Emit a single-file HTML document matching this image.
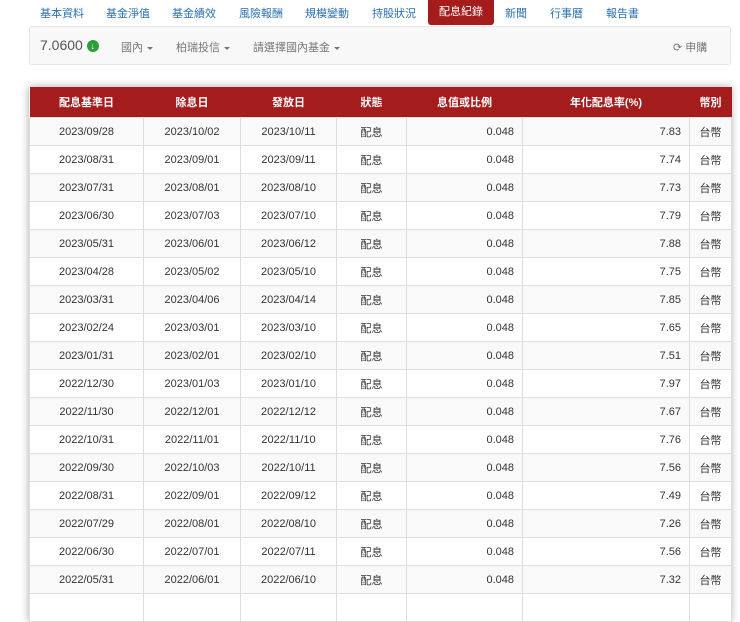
<!DOCTYPE html><html><head><meta charset="utf-8"><style>
body{margin:0;background:#fff;font-family:"Liberation Sans","Noto Sans CJK TC",sans-serif;font-size:11px;color:#333;width:740px;height:600px;overflow:hidden;position:relative}
.nav{position:absolute;top:0;left:0;height:26px;width:740px}
.nav span{position:absolute;top:5px;color:#2a6fb0;font-size:11px;white-space:nowrap}
.nav .act{background:#a51c1c;color:#fff;top:0;height:25px;line-height:25px;padding:0 11px;border-radius:0 0 3px 3px;left:428px}
.bar{position:absolute;left:29px;top:26px;width:700px;height:37px;background:#f8f8f8;border:1px solid #e7e7e7;border-radius:3px}
.bar span{position:absolute;top:12px;color:#777;font-size:11px;white-space:nowrap}
.car{display:inline-block;border-left:3px solid transparent;border-right:3px solid transparent;border-top:3px solid #777;vertical-align:middle;margin-left:4px}
.tw{position:absolute;left:29px;top:87px;width:702px;box-shadow:0 0 8px rgba(0,0,0,.35)}
table{border-collapse:collapse;width:702px;table-layout:fixed}
th{background:#a51c1c;color:#fff;height:30px;font-size:11px;font-weight:bold;padding:0}
td{height:27px;border:1px solid #ddd;text-align:center;padding:0 8px;font-size:11px;white-space:nowrap}
tr:nth-child(odd) td{background:#f9f9f9}
td.r{text-align:right}
</style></head><body>
<div class="nav">
<span style="left:40px">基本資料</span><span style="left:106px">基金淨值</span><span style="left:172px">基金績效</span><span style="left:239px">風險報酬</span><span style="left:305px">規模變動</span><span style="left:372px">持股狀況</span><span class="act">配息紀錄</span><span style="left:505px">新聞</span><span style="left:550px">行事曆</span><span style="left:606px">報告書</span>
</div>
<div class="bar">
<span style="left:10px;top:10px;font-size:14px;color:#555">7.0600 <b style="display:inline-block;width:12px;height:12px;border-radius:50%;background:#2e9e3a;color:#fff;font-size:9px;line-height:12px;text-align:center;vertical-align:1px">↓</b></span>
<span style="left:91px">國內<i class="car"></i></span>
<span style="left:146px">柏瑞投信<i class="car"></i></span>
<span style="left:223px">請選擇國內基金<i class="car"></i></span>
<span style="left:643px">⟳ 申購</span>
</div>
<div class="tw"><table>
<colgroup><col style="width:114px"><col style="width:97px"><col style="width:96px"><col style="width:70px"><col style="width:116px"><col style="width:167px"><col style="width:42px"></colgroup>
<tr><th>配息基準日</th><th>除息日</th><th>發放日</th><th>狀態</th><th>息值或比例</th><th>年化配息率(%)</th><th>幣別</th></tr>
<tbody>
<tr><td>2023/09/28</td><td>2023/10/02</td><td>2023/10/11</td><td>配息</td><td class="r">0.048</td><td class="r">7.83</td><td>台幣</td></tr>
<tr><td>2023/08/31</td><td>2023/09/01</td><td>2023/09/11</td><td>配息</td><td class="r">0.048</td><td class="r">7.74</td><td>台幣</td></tr>
<tr><td>2023/07/31</td><td>2023/08/01</td><td>2023/08/10</td><td>配息</td><td class="r">0.048</td><td class="r">7.73</td><td>台幣</td></tr>
<tr><td>2023/06/30</td><td>2023/07/03</td><td>2023/07/10</td><td>配息</td><td class="r">0.048</td><td class="r">7.79</td><td>台幣</td></tr>
<tr><td>2023/05/31</td><td>2023/06/01</td><td>2023/06/12</td><td>配息</td><td class="r">0.048</td><td class="r">7.88</td><td>台幣</td></tr>
<tr><td>2023/04/28</td><td>2023/05/02</td><td>2023/05/10</td><td>配息</td><td class="r">0.048</td><td class="r">7.75</td><td>台幣</td></tr>
<tr><td>2023/03/31</td><td>2023/04/06</td><td>2023/04/14</td><td>配息</td><td class="r">0.048</td><td class="r">7.85</td><td>台幣</td></tr>
<tr><td>2023/02/24</td><td>2023/03/01</td><td>2023/03/10</td><td>配息</td><td class="r">0.048</td><td class="r">7.65</td><td>台幣</td></tr>
<tr><td>2023/01/31</td><td>2023/02/01</td><td>2023/02/10</td><td>配息</td><td class="r">0.048</td><td class="r">7.51</td><td>台幣</td></tr>
<tr><td>2022/12/30</td><td>2023/01/03</td><td>2023/01/10</td><td>配息</td><td class="r">0.048</td><td class="r">7.97</td><td>台幣</td></tr>
<tr><td>2022/11/30</td><td>2022/12/01</td><td>2022/12/12</td><td>配息</td><td class="r">0.048</td><td class="r">7.67</td><td>台幣</td></tr>
<tr><td>2022/10/31</td><td>2022/11/01</td><td>2022/11/10</td><td>配息</td><td class="r">0.048</td><td class="r">7.76</td><td>台幣</td></tr>
<tr><td>2022/09/30</td><td>2022/10/03</td><td>2022/10/11</td><td>配息</td><td class="r">0.048</td><td class="r">7.56</td><td>台幣</td></tr>
<tr><td>2022/08/31</td><td>2022/09/01</td><td>2022/09/12</td><td>配息</td><td class="r">0.048</td><td class="r">7.49</td><td>台幣</td></tr>
<tr><td>2022/07/29</td><td>2022/08/01</td><td>2022/08/10</td><td>配息</td><td class="r">0.048</td><td class="r">7.26</td><td>台幣</td></tr>
<tr><td>2022/06/30</td><td>2022/07/01</td><td>2022/07/11</td><td>配息</td><td class="r">0.048</td><td class="r">7.56</td><td>台幣</td></tr>
<tr><td>2022/05/31</td><td>2022/06/01</td><td>2022/06/10</td><td>配息</td><td class="r">0.048</td><td class="r">7.32</td><td>台幣</td></tr>
<tr><td>&nbsp;</td><td></td><td></td><td></td><td></td><td></td><td></td></tr>
</tbody></table></div>
</body></html>
